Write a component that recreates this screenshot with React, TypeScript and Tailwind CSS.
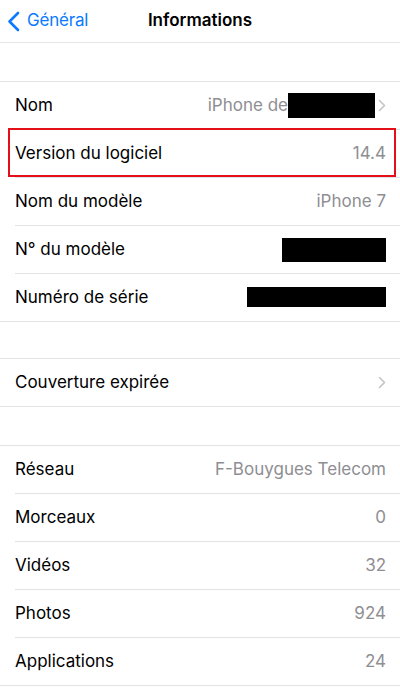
import { ReactNode } from 'react';

type Row = { label: string; value?: ReactNode; chevron?: boolean; highlight?: boolean };

const Redacted = ({ w, h }: { w: string; h: string }) => <div className={`bg-black ${w} ${h}`} />;

const Chevron = () => (
    <svg width="8" height="13" viewBox="0 0 8 13" className="ml-[3px] shrink-0">
        <path d="M1.5 1.5 L6.5 6.5 L1.5 11.5" fill="none" stroke="#c4c4c7" strokeWidth="1.6" strokeLinecap="round" strokeLinejoin="round" />
    </svg>
);

function Section({ rows }: { rows: Row[] }) {
    return (
        <div className="border-t border-[#e3e3e6] bg-white">
            {rows.map((r, i) => {
                const last = i === rows.length - 1;
                return (
                    <div key={r.label} className={`relative h-[48px] pl-[15px] ${last ? 'border-b border-[#e3e3e6]' : ''}`}>
                        <div
                            className={`flex h-full items-center justify-between pr-[14px] ${
                                last ? '' : 'border-b border-[#e3e3e6]'
                            }`}
                        >
                            <span className="text-[17px] text-black">{r.label}</span>
                            <div className="flex items-center text-[17px] text-[#8e8e93]">
                                {r.value}
                                {r.chevron && <Chevron />}
                            </div>
                        </div>
                        {r.highlight && (
                            <div className="pointer-events-none absolute left-[8px] right-[4px] top-[-2px] bottom-[1px] border-2 border-[#e3101a]" />
                        )}
                    </div>
                );
            })}
        </div>
    );
}

export default function App() {
    return (
        <div className="min-h-[693px] w-[400px] bg-white font-['Inter',sans-serif]">
            {/* Nav bar */}
            <div className="relative flex h-[43px] items-center border-b border-[#e6e6e9] bg-white">
                <div className="flex items-center pl-[7px] text-[#0a7aff]">
                    <svg width="13" height="21" viewBox="0 0 13 21">
                        <path d="M11 2 L2.5 10.5 L11 19" fill="none" stroke="#0a7aff" strokeWidth="2.6" strokeLinecap="round" strokeLinejoin="round" />
                    </svg>
                    <span className="ml-[7px] text-[17px] tracking-[-0.2px]">Général</span>
                </div>
                <div className="absolute inset-x-0 text-center text-[17px] font-semibold text-black">Informations</div>
            </div>

            <div className="h-[38px]" />

            <Section
                rows={[
                    {
                        label: 'Nom',
                        value: (
                            <div className="flex items-center">
                                <span>iPhone de</span>
                                <Redacted w="w-[87px]" h="h-[25px]" />
                            </div>
                        ),
                        chevron: true,
                    },
                    { label: 'Version du logiciel', value: '14.4', highlight: true },
                    { label: 'Nom du modèle', value: 'iPhone 7' },
                    { label: 'N° du modèle', value: <Redacted w="w-[104px]" h="h-[24px]" /> },
                    { label: 'Numéro de série', value: <div className="mt-[-2px]"><Redacted w="w-[139px]" h="h-[20px]" /></div> },
                ]}
            />

            <div className="h-[36px]" />

            <Section rows={[{ label: 'Couverture expirée', chevron: true }]} />

            <div className="h-[38px]" />

            <Section
                rows={[
                    { label: 'Réseau', value: 'F-Bouygues Telecom' },
                    { label: 'Morceaux', value: '0' },
                    { label: 'Vidéos', value: '32' },
                    { label: 'Photos', value: '924' },
                    { label: 'Applications', value: '24' },
                ]}
            />
        </div>
    );
}
